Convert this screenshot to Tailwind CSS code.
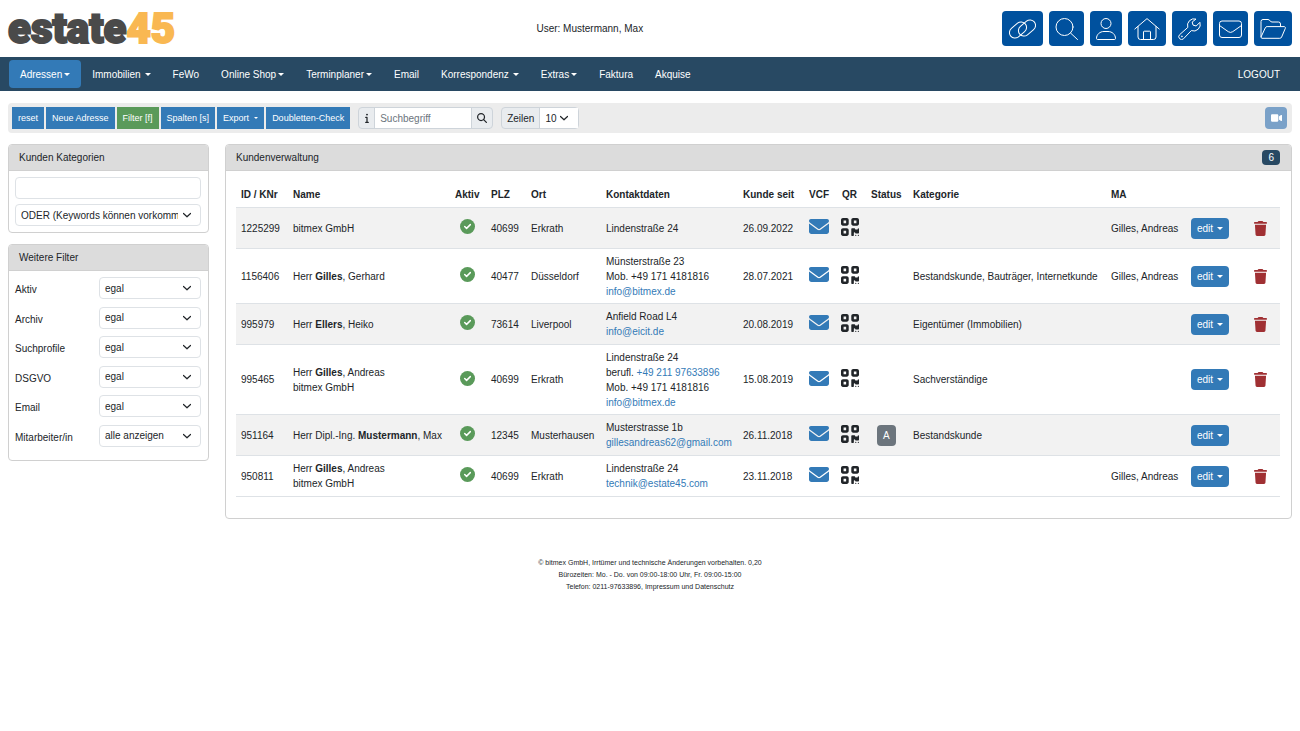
<!DOCTYPE html>
<html lang="de">
<head>
  <meta charset="UTF-8">
  <meta name="viewport" content="width=device-width, initial-scale=1.0">
  <title>estate45 - Kundenverwaltung</title>
  <script src="https://cdn.jsdelivr.net/npm/@tailwindcss/browser@4"></script>
</head>
<body class="bg-white font-['Liberation_Sans',Arial,sans-serif] text-[10px] leading-[15px] text-[#212529]">

  <!-- icon sprites -->
  <svg class="hidden">
    <symbol id="envelope" viewBox="0 64 512 384"><path fill="currentColor" d="M48 64C21.5 64 0 85.5 0 112c0 15.1 7.1 29.3 19.2 38.4L236.8 313.6c11.4 8.5 27 8.5 38.4 0L492.8 150.4c12.1-9.1 19.2-23.3 19.2-38.4c0-26.5-21.5-48-48-48H48zM0 176V384c0 35.3 28.7 64 64 64H448c35.3 0 64-28.7 64-64V176L294.4 339.2c-22.8 17.1-54 17.1-76.8 0L0 176z"/></symbol>
    <symbol id="check" viewBox="0 0 512 512"><path fill="currentColor" d="M256 512A256 256 0 1 0 256 0a256 256 0 1 0 0 512z"/><path fill="none" stroke="#fff" stroke-width="50" stroke-linecap="round" stroke-linejoin="round" d="M160 256l64 64 128-128"/></symbol>
    <symbol id="trash" viewBox="0 0 448 512"><path fill="currentColor" d="M135.2 17.7L128 32H32C14.3 32 0 46.3 0 64S14.3 96 32 96H416c17.7 0 32-14.3 32-32s-14.3-32-32-32H320l-7.2-14.3C307.4 6.8 296.3 0 284.2 0H163.8c-12.1 0-23.2 6.8-28.6 17.7zM416 128H32L53.2 467c1.6 25.3 22.6 45 47.9 45H346.9c25.3 0 46.3-19.7 47.9-45L416 128z"/></symbol>
    <symbol id="qrcode" viewBox="0 32 448 448"><path fill="currentColor" d="M0 80C0 53.5 21.5 32 48 32h96c26.5 0 48 21.5 48 48v96c0 26.5-21.5 48-48 48H48c-26.5 0-48-21.5-48-48V80zM64 96v64h64V96H64zM0 336c0-26.5 21.5-48 48-48h96c26.5 0 48 21.5 48 48v96c0 26.5-21.5 48-48 48H48c-26.5 0-48-21.5-48-48V336zm64 16v64h64V352H64zM304 32h96c26.5 0 48 21.5 48 48v96c0 26.5-21.5 48-48 48H304c-26.5 0-48-21.5-48-48V80c0-26.5 21.5-48 48-48zm80 64H320v64h64V96zM256 304c0-8.8 7.2-16 16-16h64c8.8 0 16 7.2 16 16s7.2 16 16 16h32c8.8 0 16-7.2 16-16s7.2-16 16-16s16 7.2 16 16v96c0 8.8-7.2 16-16 16H368c-8.8 0-16-7.2-16-16s-7.2-16-16-16s-16 7.2-16 16v64c0 8.8-7.2 16-16 16H272c-8.8 0-16-7.2-16-16V304zM368 480a16 16 0 1 1 0-32 16 16 0 1 1 0 32zm64 0a16 16 0 1 1 0-32 16 16 0 1 1 0 32z"/></symbol>
    <symbol id="chevron" viewBox="0 0 16 16"><path fill="none" stroke="#212529" stroke-width="2.4" stroke-linecap="round" stroke-linejoin="round" d="m1 5 7 6.500 7-6.500"/></symbol>
    <symbol id="caret" viewBox="0 0 6 3"><path fill="currentColor" d="M0 0h6L3 3z"/></symbol>
  </svg>

  <header class="grid h-[57px] grid-cols-[41%_1fr_auto] items-center px-2">
    <a href="#" class="font-['Roboto',sans-serif] text-[42px] leading-none font-black text-[#4a4a4a] [-webkit-text-stroke-width:2px]">estate<span class="text-[#f9b852]">45</span></a>
    <p class="pl-0.5">User: Mustermann, Max</p>
    <div class="flex justify-end gap-1.5 text-white">
      <a href="#" aria-label="Verknüpfungen" class="flex h-[35px] items-center rounded bg-[#00519e] px-[7px]">
        <svg class="h-[22px] w-[27px]" viewBox="0 0 27 22" fill="none" stroke="currentColor"><rect x="-.5" y="6.500" width="19" height="11" rx="5.500" transform="rotate(-40 9 12)"/><rect x="8.500" y="4.500" width="19" height="11" rx="5.500" transform="rotate(-40 18 10)"/></svg>
      </a>
      <a href="#" aria-label="Suche" class="flex h-[35px] items-center rounded bg-[#00519e] px-1.5">
        <svg class="h-[22px] w-[23px]" viewBox="0 0 23 22" fill="none" stroke="currentColor" stroke-linecap="round"><circle cx="9.500" cy="9" r="8.500"/><path d="m15.500 15 7 6.500"/></svg>
      </a>
      <a href="#" aria-label="Benutzer" class="flex h-[35px] items-center rounded bg-[#00519e] px-1.5">
        <svg class="h-[22px] w-[20px]" viewBox="0 0 20 22" fill="none" stroke="currentColor"><circle cx="10" cy="5.500" r="5"/><path d="M8 13.500h4c4.200 0 7.500 3 7.500 7 0 .6-.4 1-1 1h-17c-.6 0-1-.4-1-1 0-4 3.300-7 7.500-7z"/></svg>
      </a>
      <a href="#" aria-label="Start" class="flex h-[35px] items-center rounded bg-[#00519e] px-1.5">
        <svg class="h-[22px] w-[26px]" viewBox="0 0 26 22" fill="none" stroke="currentColor" stroke-linecap="round" stroke-linejoin="round"><path d="M.8 11 13 .6 25.200 11M4 8.500v10.500a2.500 2.500 0 0 0 2.500 2.500h13a2.500 2.500 0 0 0 2.500-2.500v-10.500M9.500 21.500v-7.500a.8.8 0 0 1 .8-.8h5.400a.8.8 0 0 1 .8.800v7.500"/></svg>
      </a>
      <a href="#" aria-label="Einstellungen" class="flex h-[35px] items-center rounded bg-[#00519e] px-1.5">
        <svg class="h-[22px] w-[23px]" viewBox="0 0 23 22" fill="none" stroke="currentColor" stroke-linejoin="round"><path d="M18 1.100a6.600 6.600 0 0 0-8.200 8.300L1.600 16.700a2.800 2.800 0 1 0 4 4l7.700-8.100a6.600 6.600 0 0 0 8.600-8.300l-3.700 3.700-3.200-.9-.8-3.100z"/><circle cx="3.900" cy="18.400" r=".5"/></svg>
      </a>
      <a href="#" aria-label="Nachrichten" class="flex h-[35px] items-center rounded bg-[#00519e] px-1.5">
        <svg class="h-[22px] w-[23px]" viewBox="0 0 23 22" fill="none" stroke="currentColor"><rect x=".5" y="3" width="22" height="16.500" rx="2.500"/><path d="m.5 7.500 8.800 6.200a4 4 0 0 0 4.400 0l8.800-6.200"/></svg>
      </a>
      <a href="#" aria-label="Dateien" class="flex h-[35px] items-center rounded bg-[#00519e] px-1.5">
        <svg class="h-[22px] w-[26px]" viewBox="0 0 26 22" fill="none" stroke="currentColor" stroke-linejoin="round"><path d="M1 19V3.500a2 2 0 0 1 2-2h5c1.500 0 2.500 2.500 4 2.500h6.500a2 2 0 0 1 2 2v2.500M1 19l4.300-9.200a2 2 0 0 1 1.800-1.200h17c1 0 1.600.9 1.200 1.800l-3.700 8.700a2 2 0 0 1-1.800 1.200H2c-.6 0-1-.5-1-1.300z"/></svg>
      </a>
    </div>
  </header>

  <nav class="flex h-[34px] items-center justify-between bg-[#284963] px-[9px] text-white">
    <ul class="flex items-center [&_a]:flex [&_a]:h-7 [&_a]:items-center [&_a]:gap-0.5 [&_a]:rounded [&_a]:px-[11px] [&_svg]:h-[3px] [&_svg]:w-1.5">
      <li><a href="#" class="bg-[#337ab7]">Adressen <svg><use href="#caret"/></svg></a></li>
      <li><a href="#">Immobilien <svg class="ml-0.5"><use href="#caret"/></svg></a></li>
      <li><a href="#">FeWo</a></li>
      <li><a href="#">Online Shop <svg><use href="#caret"/></svg></a></li>
      <li><a href="#">Terminplaner <svg><use href="#caret"/></svg></a></li>
      <li><a href="#">Email</a></li>
      <li><a href="#">Korrespondenz <svg class="ml-0.5"><use href="#caret"/></svg></a></li>
      <li><a href="#">Extras <svg><use href="#caret"/></svg></a></li>
      <li><a href="#">Faktura</a></li>
      <li><a href="#">Akquise</a></li>
    </ul>
    <a href="#" class="px-[11px]">LOGOUT</a>
  </nav>

  <div class="mx-2 mt-3 flex h-[30px] items-center rounded-sm bg-[#ececec] pr-[5px] pl-1">
    <div class="flex gap-0.5 text-[9px] text-white [&_button]:h-[22px] [&_button]:bg-[#337ab7] [&_button]:px-1.5">
      <button type="button">reset</button>
      <button type="button">Neue Adresse</button>
      <button type="button" class="bg-[#5a9a5a]!">Filter [f]</button>
      <button type="button">Spalten [s]</button>
      <button type="button" class="flex items-center gap-[5px]">Export <svg class="h-0.5 w-1"><use href="#caret"/></svg></button>
      <button type="button">Doubletten-Check</button>
    </div>
    <form class="ml-2 flex h-[22px] rounded-sm border border-[#ced4da] bg-[#e9ecef]">
      <button type="button" aria-label="Info" class="flex w-[15px] items-center justify-center">
        <svg class="h-2.5 w-1" viewBox="0 0 192 512"><path fill="currentColor" d="M48 80a48 48 0 1 1 96 0A48 48 0 1 1 48 80zM0 224c0-17.700 14.300-32 32-32H96c17.700 0 32 14.300 32 32V448h32c17.700 0 32 14.300 32 32s-14.300 32-32 32H32c-17.700 0-32-14.300-32-32s14.300-32 32-32H64V256H32c-17.700 0-32-14.300-32-32z"/></svg>
      </button>
      <input type="text" aria-label="Suchbegriff" placeholder="Suchbegriff" class="w-[98px] border-x border-[#ced4da] bg-white px-[5px] placeholder:text-[#6c757d]">
      <button type="button" aria-label="Suchen" class="flex w-5 items-center justify-center">
        <svg class="size-2.5" viewBox="0 0 512 512"><path fill="currentColor" d="M416 208c0 45.900-14.900 88.300-40 122.700L502.600 457.400c12.500 12.500 12.500 32.800 0 45.300s-32.800 12.500-45.300 0L330.700 376c-34.400 25.200-76.800 40-122.700 40C93.100 416 0 322.900 0 208S93.100 0 208 0S416 93.100 416 208zM208 352a144 144 0 1 0 0-288 144 144 0 1 0 0 288z"/></svg>
      </button>
    </form>
    <div class="ml-2 flex h-[22px] items-stretch rounded-sm border border-[#ced4da] bg-[#e9ecef]">
      <label for="zeilen" class="flex items-center px-[5px]">Zeilen</label>
      <div class="grid items-center border-l border-[#ced4da] bg-white">
        <select id="zeilen" class="col-start-1 row-start-1 h-5 w-[38px] appearance-none pl-[5px]"><option>10</option></select>
        <svg class="pointer-events-none col-start-1 row-start-1 mr-2.5 size-2 justify-self-end"><use href="#chevron"/></svg>
      </div>
    </div>
    <button type="button" aria-label="Video" class="ml-auto flex size-[22px] items-center justify-center rounded-sm bg-[#7aa1c8] text-white">
      <svg class="h-2.5 w-[11px]" viewBox="0 0 576 512"><path fill="currentColor" d="M0 128C0 92.700 28.700 64 64 64H320c35.300 0 64 28.700 64 64V384c0 35.300-28.700 64-64 64H64c-35.300 0-64-28.700-64-64V128zM559.100 99.800c10.400 5.600 16.900 16.400 16.900 28.200V384c0 11.800-6.500 22.600-16.900 28.200s-23 5-32.900-1.600l-96-64L416 337.100V320 192 174.900l14.200-9.500 96-64c9.800-6.500 22.400-7.200 32.900-1.600z"/></svg>
    </button>
  </div>

  <main class="flex items-start gap-4 px-2 pt-[11px]">
    <aside class="flex w-[201px] shrink-0 flex-col gap-[11px] [&_select]:col-start-1 [&_select]:row-start-1 [&_select]:h-[22px] [&_select]:w-full [&_select]:appearance-none [&_select]:rounded-sm [&_select]:border [&_select]:border-[#dee2e6] [&_select]:bg-white [&_select]:pr-[22px] [&_select]:pl-[5px] [&_svg]:pointer-events-none [&_svg]:col-start-1 [&_svg]:row-start-1 [&_svg]:mr-2.5 [&_svg]:size-2 [&_svg]:justify-self-end">
      <section class="overflow-hidden rounded border border-[#d0d0d0]">
        <h2 class="border-b border-[#d0d0d0] bg-[#dcdcdc] px-2.5 py-[5px]">Kunden Kategorien</h2>
        <div class="flex flex-col gap-[5px] py-1.5 pr-[7px] pl-1.5">
          <input type="text" aria-label="Kategorie" class="h-[22px] rounded-sm border border-[#dee2e6] px-[5px]">
          <div class="grid items-center">
            <select aria-label="Verknüpfung"><option>ODER (Keywords können vorkommen)</option></select>
            <svg><use href="#chevron"/></svg>
          </div>
        </div>
      </section>

      <section class="overflow-hidden rounded border border-[#d0d0d0]">
        <h2 class="border-b border-[#d0d0d0] bg-[#dcdcdc] px-2.5 py-[5px]">Weitere Filter</h2>
        <div class="mt-1.5 mr-[7px] mb-[13px] ml-1.5 flex h-[170px] flex-col justify-between [&>div]:grid [&>div]:grid-cols-[1fr_102px] [&>div]:items-center [&_label]:pt-[3px]">
          <div>
            <label for="aktiv">Aktiv</label>
            <div class="grid items-center"><select id="aktiv"><option>egal</option></select><svg><use href="#chevron"/></svg></div>
          </div>
          <div>
            <label for="archiv">Archiv</label>
            <div class="grid items-center"><select id="archiv"><option>egal</option></select><svg><use href="#chevron"/></svg></div>
          </div>
          <div>
            <label for="suchprofile">Suchprofile</label>
            <div class="grid items-center"><select id="suchprofile"><option>egal</option></select><svg><use href="#chevron"/></svg></div>
          </div>
          <div>
            <label for="dsgvo">DSGVO</label>
            <div class="grid items-center"><select id="dsgvo"><option>egal</option></select><svg><use href="#chevron"/></svg></div>
          </div>
          <div>
            <label for="email">Email</label>
            <div class="grid items-center"><select id="email"><option>egal</option></select><svg><use href="#chevron"/></svg></div>
          </div>
          <div>
            <label for="mitarbeiter">Mitarbeiter/in</label>
            <div class="grid items-center"><select id="mitarbeiter"><option>alle anzeigen</option></select><svg><use href="#chevron"/></svg></div>
          </div>
        </div>
      </section>
    </aside>

    <section class="min-w-0 flex-1 overflow-hidden rounded border border-[#d0d0d0]">
      <div class="flex items-center justify-between border-b border-[#d0d0d0] bg-[#dcdcdc] py-[5px] pr-[11px] pl-2.5">
        <h2>Kundenverwaltung</h2>
        <span class="rounded bg-[#284963] px-1.5 text-white">6</span>
      </div>
      <div class="pt-2.5 pr-[11px] pb-[21px] pl-2.5">
        <table class="w-full table-fixed border-collapse [&_a]:text-[#337ab7] [&_td]:pt-[5px] [&_td]:pr-0 [&_td]:pb-1 [&_td]:pl-[5px] [&_td]:whitespace-nowrap [&_th]:pt-0.5 [&_th]:pl-[5px] [&_th]:text-left [&_th]:whitespace-nowrap [&_tr]:border-b [&_tr]:border-[#dee2e6] [&_svg]:block">
          <colgroup>
            <col class="w-[52px]"><col class="w-[162px]"><col class="w-[36px]"><col class="w-[40px]"><col class="w-[75px]"><col class="w-[137px]"><col class="w-[66px]"><col class="w-[32px]"><col class="w-[30px]"><col class="w-[42px]"><col class="w-[198px]"><col class="w-[80px]"><col class="w-[63px]"><col class="w-[31px]">
          </colgroup>
          <thead>
            <tr class="h-[26px]">
              <th>ID / KNr</th><th>Name</th><th>Aktiv</th><th>PLZ</th><th>Ort</th><th>Kontaktdaten</th><th>Kunde seit</th><th>VCF</th><th class="pl-1.5!">QR</th><th>Status</th><th>Kategorie</th><th>MA</th><th></th><th></th>
            </tr>
          </thead>
          <tbody class="[&_tr]:h-[41px] [&_tr:nth-child(odd)]:bg-[#f2f2f2] [&_button]:flex [&_button]:h-[21px] [&_button]:items-center [&_button]:gap-1 [&_button]:rounded-sm [&_td>svg]:mb-[3px] [&_td>a>svg]:mb-[3px]">
            <tr>
              <td>1225299</td>
              <td>bitmex GmbH</td>
              <td><svg class="ml-[5px] size-[15px] text-[#5a9a5a]"><use href="#check"/></svg></td>
              <td>40699</td>
              <td>Erkrath</td>
              <td>Lindenstraße 24</td>
              <td>26.09.2022</td>
              <td><a href="#" aria-label="VCF"><svg class="h-[15px] w-5"><use href="#envelope"/></svg></a></td>
              <td><svg class="size-[18px]"><use href="#qrcode"/></svg></td>
              <td></td>
              <td></td>
              <td>Gilles, Andreas</td>
              <td><button type="button" class="bg-[#337ab7] px-1.5 text-white">edit <svg class="h-[3px] w-1.5"><use href="#caret"/></svg></button></td>
              <td><button type="button" aria-label="Löschen" class="text-[#a03033]"><svg class="h-[15px] w-[13px]"><use href="#trash"/></svg></button></td>
            </tr>
            <tr>
              <td>1156406</td>
              <td>Herr <b>Gilles</b>, Gerhard</td>
              <td><svg class="ml-[5px] size-[15px] text-[#5a9a5a]"><use href="#check"/></svg></td>
              <td>40477</td>
              <td>Düsseldorf</td>
              <td>Münsterstraße 23<br>Mob. +49 171 4181816<br><a href="#">info@bitmex.de</a></td>
              <td>28.07.2021</td>
              <td><a href="#" aria-label="VCF"><svg class="h-[15px] w-5"><use href="#envelope"/></svg></a></td>
              <td><svg class="size-[18px]"><use href="#qrcode"/></svg></td>
              <td></td>
              <td>Bestandskunde, Bauträger, Internetkunde</td>
              <td>Gilles, Andreas</td>
              <td><button type="button" class="bg-[#337ab7] px-1.5 text-white">edit <svg class="h-[3px] w-1.5"><use href="#caret"/></svg></button></td>
              <td><button type="button" aria-label="Löschen" class="text-[#a03033]"><svg class="h-[15px] w-[13px]"><use href="#trash"/></svg></button></td>
            </tr>
            <tr>
              <td>995979</td>
              <td>Herr <b>Ellers</b>, Heiko</td>
              <td><svg class="ml-[5px] size-[15px] text-[#5a9a5a]"><use href="#check"/></svg></td>
              <td>73614</td>
              <td>Liverpool</td>
              <td>Anfield Road L4<br><a href="#">info@eicit.de</a></td>
              <td>20.08.2019</td>
              <td><a href="#" aria-label="VCF"><svg class="h-[15px] w-5"><use href="#envelope"/></svg></a></td>
              <td><svg class="size-[18px]"><use href="#qrcode"/></svg></td>
              <td></td>
              <td>Eigentümer (Immobilien)</td>
              <td></td>
              <td><button type="button" class="bg-[#337ab7] px-1.5 text-white">edit <svg class="h-[3px] w-1.5"><use href="#caret"/></svg></button></td>
              <td><button type="button" aria-label="Löschen" class="text-[#a03033]"><svg class="h-[15px] w-[13px]"><use href="#trash"/></svg></button></td>
            </tr>
            <tr>
              <td>995465</td>
              <td>Herr <b>Gilles</b>, Andreas<br>bitmex GmbH</td>
              <td><svg class="ml-[5px] size-[15px] text-[#5a9a5a]"><use href="#check"/></svg></td>
              <td>40699</td>
              <td>Erkrath</td>
              <td>Lindenstraße 24<br>berufl. <a href="#">+49 211 97633896</a><br>Mob. +49 171 4181816<br><a href="#">info@bitmex.de</a></td>
              <td>15.08.2019</td>
              <td><a href="#" aria-label="VCF"><svg class="h-[15px] w-5"><use href="#envelope"/></svg></a></td>
              <td><svg class="size-[18px]"><use href="#qrcode"/></svg></td>
              <td></td>
              <td>Sachverständige</td>
              <td></td>
              <td><button type="button" class="bg-[#337ab7] px-1.5 text-white">edit <svg class="h-[3px] w-1.5"><use href="#caret"/></svg></button></td>
              <td><button type="button" aria-label="Löschen" class="text-[#a03033]"><svg class="h-[15px] w-[13px]"><use href="#trash"/></svg></button></td>
            </tr>
            <tr>
              <td>951164</td>
              <td>Herr Dipl.-Ing. <b>Mustermann</b>, Max</td>
              <td><svg class="ml-[5px] size-[15px] text-[#5a9a5a]"><use href="#check"/></svg></td>
              <td>12345</td>
              <td>Musterhausen</td>
              <td>Musterstrasse 1b<br><a href="#">gillesandreas62@gmail.com</a></td>
              <td>26.11.2018</td>
              <td><a href="#" aria-label="VCF"><svg class="h-[15px] w-5"><use href="#envelope"/></svg></a></td>
              <td><svg class="size-[18px]"><use href="#qrcode"/></svg></td>
              <td><button type="button" class="ml-1.5 bg-[#6c757d] px-1.5 text-white">A</button></td>
              <td>Bestandskunde</td>
              <td></td>
              <td><button type="button" class="bg-[#337ab7] px-1.5 text-white">edit <svg class="h-[3px] w-1.5"><use href="#caret"/></svg></button></td>
              <td></td>
            </tr>
            <tr>
              <td>950811</td>
              <td>Herr <b>Gilles</b>, Andreas<br>bitmex GmbH</td>
              <td><svg class="ml-[5px] size-[15px] text-[#5a9a5a]"><use href="#check"/></svg></td>
              <td>40699</td>
              <td>Erkrath</td>
              <td>Lindenstraße 24<br><a href="#">technik@estate45.com</a></td>
              <td>23.11.2018</td>
              <td><a href="#" aria-label="VCF"><svg class="h-[15px] w-5"><use href="#envelope"/></svg></a></td>
              <td><svg class="size-[18px]"><use href="#qrcode"/></svg></td>
              <td></td>
              <td></td>
              <td>Gilles, Andreas</td>
              <td><button type="button" class="bg-[#337ab7] px-1.5 text-white">edit <svg class="h-[3px] w-1.5"><use href="#caret"/></svg></button></td>
              <td><button type="button" aria-label="Löschen" class="text-[#a03033]"><svg class="h-[15px] w-[13px]"><use href="#trash"/></svg></button></td>
            </tr>
          </tbody>
        </table>
      </div>
    </section>
  </main>

  <footer class="pt-[38px] text-center text-[7px] leading-3">
    <p>© bitmex GmbH, Irrtümer und technische Änderungen vorbehalten. 0,20</p>
    <p>Bürozeiten: Mo. - Do. von 09:00-18:00 Uhr, Fr. 09:00-15:00</p>
    <p>Telefon: 0211-97633896, <a href="#">Impressum</a> und <a href="#">Datenschutz</a></p>
  </footer>

</body>
</html>
